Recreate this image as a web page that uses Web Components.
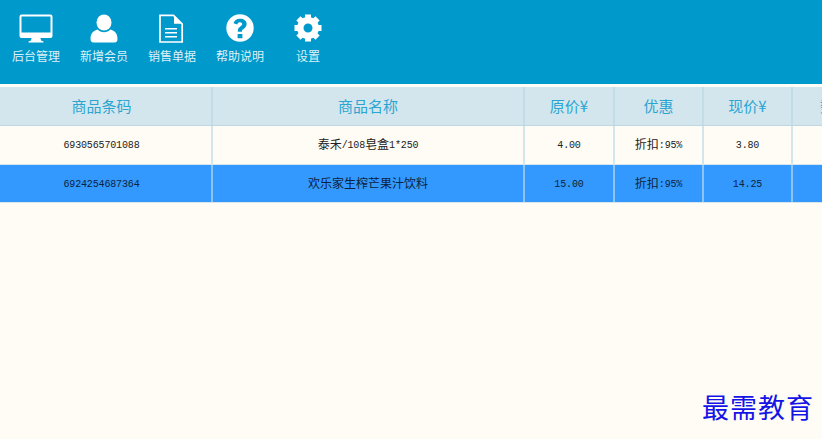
<!DOCTYPE html>
<html>
<head>
<meta charset="utf-8">
<style>
  html, body { margin: 0; height: 100%; }
  body { background: #fffcf5; overflow: hidden; font-family: "Liberation Sans", "Noto Sans CJK SC", sans-serif; }
  pos-app { height: 439px; }
</style>
</head>
<body>
<pos-app>
  <pos-toolbar>
    <tool-button label="后台管理" icon="monitor"></tool-button>
    <tool-button label="新增会员" icon="user"></tool-button>
    <tool-button label="销售单据" icon="doc"></tool-button>
    <tool-button label="帮助说明" icon="help"></tool-button>
    <tool-button label="设置" icon="gear"></tool-button>
  </pos-toolbar>
  <goods-table>
    <goods-row head code="商品条码" name="商品名称" price="原价¥" off="优惠" now="现价¥" extra="数量"></goods-row>
    <goods-row code="6930565701088" name="泰禾/108皂盒1*250" price="4.00" off="折扣:95%" now="3.80"></goods-row>
    <goods-row selected code="6924254687364" name="欢乐家生榨芒果汁饮料" price="15.00" off="折扣:95%" now="14.25"></goods-row>
  </goods-table>
  <span slot="mark">最需教育</span>
</pos-app>
<script>
let gearTeeth = '';
for (let i = 0; i < 8; i++) gearTeeth += `<rect x="14" y="0.500" width="6" height="6" transform="rotate(${i * 45} 17 14)"/>`;

const ICONS = {
  monitor: `<path fill-rule="evenodd" d="M2.500.5h29a2 2 0 0 1 2 2V22a2 2 0 0 1-2 2h-29a2 2 0 0 1-2-2V2.500a2 2 0 0 1 2-2zm0 2v16h29v-16z"/><path d="M12.500 24h9l.5 2.500 2.500 1v1h-15v-1l2.500-1z"/>`,
  user: `<ellipse cx="17" cy="8.500" rx="7.500" ry="8"/><path d="M10.800 15.500c2.500 3.500 9.900 3.500 12.400 0 4.500 1.300 7.300 3.600 7.300 9.500 0 2.300-1 3.500-3 3.500H6.500c-2 0-3-1.200-3-3.500 0-5.900 2.800-8.200 7.300-9.500z"/>`,
  doc: `<path fill="none" stroke="#fff" stroke-width="1.700" d="M5 1.300h13.500L27.200 10v18H5z"/><path d="M19 1.300v8.500h8.200z"/><path d="M10 14h12v1.600H10zM10 18h12v1.600H10zM10 22h12v1.600H10z"/>`,
  help: `<path fill-rule="evenodd" transform="translate(0 -2.200)" d="M17 2.500a13.700 13.700 0 1 1 0 27.400 13.700 13.700 0 0 1 0-27.400zm-2.400 19.700v4.300h4.800v-4.300zM17 7c-3.500 0-5.800 1.800-6.500 4.500l3.800 1.300c.4-1.500 1.200-2.300 2.600-2.300 1.400 0 2.300.7 2.300 1.800 0 1-.6 1.500-1.900 2.400-1.700 1.200-2.500 2.300-2.500 4.300v1h4.200v-.8c0-.8.4-1.300 1.600-2.100 1.800-1.200 3-2.600 3-4.900C23.600 9 21 7 17 7z"/>`,
  gear: `${gearTeeth}<circle cx="17" cy="14" r="7.700" fill="none" stroke="#fff" stroke-width="6.400"/>`
};

class PosApp extends HTMLElement {
  constructor() {
    super();
    this.attachShadow({ mode: 'open' }).innerHTML = `
    <style>
      :host { display: block; position: relative; }
      .mark {
        position: absolute; right: 8px; bottom: 16px;
        font: 27px/32px "Noto Sans CJK SC", serif;
        color: #1414e6; letter-spacing: 1px;
      }
    </style>
    <slot></slot>
    <div class="mark"><slot name="mark"></slot></div>`;
  }
}

class PosToolbar extends HTMLElement {
  constructor() {
    super();
    this.attachShadow({ mode: 'open' }).innerHTML = `
    <style>
      :host {
        display: flex; height: 84px; box-sizing: border-box;
        background: #0099cc; padding: 14px 0 0 2px;
      }
    </style>
    <slot></slot>`;
  }
}

class ToolButton extends HTMLElement {
  connectedCallback() {
    this.attachShadow({ mode: 'open' }).innerHTML = `
    <style>
      :host {
        display: flex; flex-direction: column; align-items: center;
        width: 68px; color: #dff1f8;
        font: 12px/16px "Noto Sans CJK SC", sans-serif;
      }
      svg { display: block; fill: #fff; margin-bottom: 4px; }
    </style>
    <svg width="34" height="30" viewBox="0 0 34 30">${ICONS[this.getAttribute('icon')]}</svg>
    <span>${this.getAttribute('label')}</span>`;
  }
}

class GoodsTable extends HTMLElement {
  constructor() {
    super();
    this.attachShadow({ mode: 'open' }).innerHTML = `
    <style>
      :host { display: block; padding-top: 3px; }
    </style>
    <slot></slot>`;
  }
}

class GoodsRow extends HTMLElement {
  connectedCallback() {
    const cell = n => (this.getAttribute(n) || '').replace(/[\x21-\x7e]+/g, m => `<span class="n">${m}</span>`);
    this.attachShadow({ mode: 'open' }).innerHTML = `
    <style>
      :host {
        display: grid; grid-template-columns: 213px 312px 90px 89px 89px 84px;
        width: 877px; height: 39px; box-sizing: border-box;
        border-bottom: 1px solid #d5e6ec;
        font: 12px/36px "Noto Sans CJK SC", sans-serif;
        color: #222;
      }
      :host([head]) {
        background: #d4e6ed; color: #2aa5d2; border-bottom-color: #bed8e1;
        font-size: 15px; line-height: 38px;
      }
      :host([selected]) { background: #3399ff; color: #0c2340; height: 38px; }
      div { text-align: center; border-right: 2px solid #d3e6ec; white-space: nowrap; }
      :host([head]) div { border-right-color: #c4dce5; }
      :host([selected]) div { border-right-color: #8ec4f2; }
      div:first-of-type { padding-right: 8px; }
      div:last-of-type { border-right: 0; }
      .n { font: 10px "Liberation Mono", monospace; letter-spacing: -.15px; vertical-align: 1px; }
      :host([head]) .n { font: 15px "Noto Sans CJK SC", sans-serif; letter-spacing: 0; vertical-align: baseline; }
    </style>
    <div>${cell('code')}</div>
    <div>${cell('name')}</div>
    <div>${cell('price')}</div>
    <div>${cell('off')}</div>
    <div>${cell('now')}</div>
    <div>${cell('extra')}</div>`;
  }
}

customElements.define('pos-app', PosApp);
customElements.define('pos-toolbar', PosToolbar);
customElements.define('tool-button', ToolButton);
customElements.define('goods-table', GoodsTable);
customElements.define('goods-row', GoodsRow);
</script>
</body>
</html>
